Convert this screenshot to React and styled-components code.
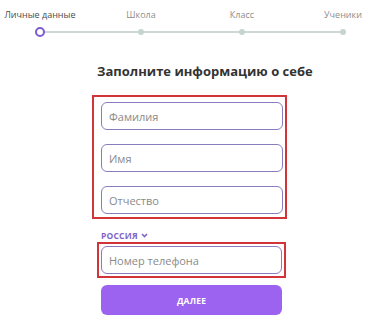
import React from "react";
import styled, { createGlobalStyle } from "styled-components";

const Global = createGlobalStyle`
  html, body { margin: 0; padding: 0; background: #fff; }
  body { font-family: "Open Sans", "Noto Sans", sans-serif; width: 368px; height: 320px; overflow: hidden; }
  * { box-sizing: border-box; }
`;

const Page = styled.div`
  width: 368px;
  height: 320px;
  display: flex;
  flex-direction: column;
  overflow: hidden;
`;

const Labels = styled.div`
  display: grid;
  grid-template-columns: repeat(4, 50px);
  column-gap: 51px;
  margin-left: 15px;
  padding-top: 8px;
  height: 23px;
`;

const Label = styled.div`
  display: flex;
  justify-content: center;
  white-space: nowrap;
  font-size: 9px;
  line-height: 14px;
  color: ${(p) => (p.$active ? "#4a4a4a" : "#8d8d8d")};
`;

const Track = styled.div`
  display: flex;
  align-items: center;
  margin-left: 35px;
  height: 10px;
  margin-top: 4px;
`;

const Ring = styled.span`
  width: 10px;
  height: 10px;
  border-radius: 50%;
  border: 2.5px solid #7b5bd0;
  flex: none;
`;

const Dot = styled.span`
  width: 6px;
  height: 6px;
  border-radius: 50%;
  background: #c6d3d1;
  flex: none;
`;

const Line = styled.span`
  width: ${(p) => p.$w}px;
  height: 1.5px;
  background: #cdd8d6;
  flex: none;
`;

const Title = styled.h1`
  margin: 25px 0 15px 0;
  padding-left: 97px;
  width: 287px;
  text-align: center;
  font-size: 13px;
  line-height: 18px;
  font-weight: 700;
  color: #333;
  white-space: nowrap;
`;

const Highlight = styled.div`
  border: 2px solid #d2343a;
  margin-left: ${(p) => p.$left}px;
  width: ${(p) => p.$width}px;
  padding: ${(p) => p.$pad};
  display: flex;
  flex-direction: column;
  gap: 14px;
`;

const Input = styled.input`
  width: ${(p) => p.$w || 182}px;
  height: 28px;
  border: 1.5px solid #8b7cc0;
  border-radius: 6px;
  padding: 0 7px;
  font-family: "Open Sans", "Noto Sans", sans-serif;
  font-size: 11px;
  color: #333;
  background: #fff;
  outline: none;
  &::placeholder { color: #8a8a8a; }
`;

const Country = styled.div`
  margin: 9px 0 0 101px;
  display: flex;
  align-items: center;
  gap: 3px;
  font-size: 8.5px;
  font-weight: 700;
  color: #7f63c8;
  height: 14px;
  letter-spacing: 0.2px;
`;

const Button = styled.button`
  margin: 7px 0 0 101px;
  width: 181px;
  height: 30px;
  border: none;
  border-radius: 6px;
  background: #9b63ef;
  color: #fff;
  font-family: "Open Sans", "Noto Sans", sans-serif;
  font-size: 8.5px;
  font-weight: 700;
  letter-spacing: 0.2px;
`;

const steps = ["Личные данные", "Школа", "Класс", "Ученики"];

export default function App() {
  return (
    <Page>
      <Global />
      <Labels>
        {steps.map((s, i) => (
          <Label key={s} $active={i === 0}>{s}</Label>
        ))}
      </Labels>
      <Track>
        <Ring />
        <Line $w={93} />
        <Dot />
        <Line $w={95} />
        <Dot />
        <Line $w={95} />
        <Dot />
      </Track>
      <Title>Заполните информацию о себе</Title>
      <Highlight $left={92} $width={195} $pad="5px 2px 3px 7px">
        <Input placeholder="Фамилия" />
        <Input placeholder="Имя" />
        <Input placeholder="Отчество" />
      </Highlight>
      <Country>
        РОССИЯ
        <svg width="7" height="5" viewBox="0 0 7 5">
          <path d="M1 1l2.5 2.5L6 1" fill="none" stroke="#7f63c8" strokeWidth="1.6" />
        </svg>
      </Country>
      <Highlight $left={97} $width={189} $pad="2px">
        <Input placeholder="Номер телефона" $w={181} />
      </Highlight>
      <Button>ДАЛЕЕ</Button>
    </Page>
  );
}
